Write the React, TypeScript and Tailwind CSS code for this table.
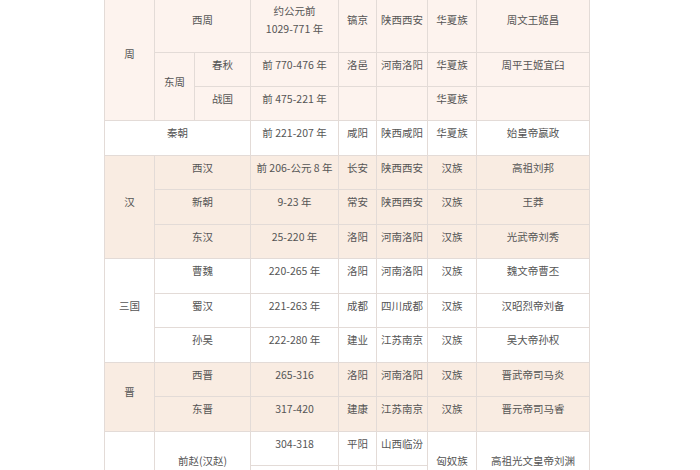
import React from "react";

type CellProps = {
  children?: React.ReactNode;
  colSpan?: number;
  rowSpan?: number;
};

function C({ children, colSpan, rowSpan }: CellProps) {
  return (
    <td
      colSpan={colSpan}
      rowSpan={rowSpan}
      className="border border-[#e3dbd7] text-center align-middle px-0 pt-0 pb-[10px] leading-[18px]"
    >
      {children}
    </td>
  );
}

export default function App() {
  const zhou = "bg-[#fdf3ee]";
  const han = "bg-[#f9ece2]";
  const white = "bg-white";
  return (
    <div className="w-[700px] h-[470px] overflow-hidden bg-white">
      <table
        className="ml-[104px] -mt-[3px] border-collapse table-fixed w-[485px] text-[10.5px] text-[#555555]"
        style={{ fontFamily: '"Noto Sans CJK SC", "Noto Sans", sans-serif' }}
      >
        <colgroup>
          <col className="w-[50px]" />
          <col className="w-[40px]" />
          <col className="w-[56px]" />
          <col className="w-[88px]" />
          <col className="w-[38px]" />
          <col className="w-[51px]" />
          <col className="w-[49px]" />
          <col className="w-[113px]" />
        </colgroup>
        <tbody>
          <tr className={`${zhou} h-[55px]`}>
            <C rowSpan={3}>周</C>
            <C colSpan={2}>西周</C>
            <C>
              约公元前
              <br />
              1029-771 年
            </C>
            <C>镐京</C>
            <C>陕西西安</C>
            <C>华夏族</C>
            <C>周文王姬昌</C>
          </tr>
          <tr className={`${zhou} h-[34px]`}>
            <C rowSpan={2}>东周</C>
            <C>春秋</C>
            <C>前 770-476 年</C>
            <C>洛邑</C>
            <C>河南洛阳</C>
            <C>华夏族</C>
            <C>周平王姬宜臼</C>
          </tr>
          <tr className={`${zhou} h-[34px]`}>
            <C>战国</C>
            <C>前 475-221 年</C>
            <C></C>
            <C></C>
            <C>华夏族</C>
            <C></C>
          </tr>
          <tr className={`${white} h-[35px]`}>
            <C colSpan={3}>秦朝</C>
            <C>前 221-207 年</C>
            <C>咸阳</C>
            <C>陕西咸阳</C>
            <C>华夏族</C>
            <C>始皇帝嬴政</C>
          </tr>
          <tr className={`${han} h-[34px]`}>
            <C rowSpan={3}>汉</C>
            <C colSpan={2}>西汉</C>
            <C>前 206-公元 8 年</C>
            <C>长安</C>
            <C>陕西西安</C>
            <C>汉族</C>
            <C>高祖刘邦</C>
          </tr>
          <tr className={`${han} h-[35px]`}>
            <C colSpan={2}>新朝</C>
            <C>9-23 年</C>
            <C>常安</C>
            <C>陕西西安</C>
            <C>汉族</C>
            <C>王莽</C>
          </tr>
          <tr className={`${han} h-[34px]`}>
            <C colSpan={2}>东汉</C>
            <C>25-220 年</C>
            <C>洛阳</C>
            <C>河南洛阳</C>
            <C>汉族</C>
            <C>光武帝刘秀</C>
          </tr>
          <tr className={`${white} h-[35px]`}>
            <C rowSpan={3}>三国</C>
            <C colSpan={2}>曹魏</C>
            <C>220-265 年</C>
            <C>洛阳</C>
            <C>河南洛阳</C>
            <C>汉族</C>
            <C>魏文帝曹丕</C>
          </tr>
          <tr className={`${white} h-[34px]`}>
            <C colSpan={2}>蜀汉</C>
            <C>221-263 年</C>
            <C>成都</C>
            <C>四川成都</C>
            <C>汉族</C>
            <C>汉昭烈帝刘备</C>
          </tr>
          <tr className={`${white} h-[35px]`}>
            <C colSpan={2}>孙吴</C>
            <C>222-280 年</C>
            <C>建业</C>
            <C>江苏南京</C>
            <C>汉族</C>
            <C>吴大帝孙权</C>
          </tr>
          <tr className={`${han} h-[34px]`}>
            <C rowSpan={2}>晋</C>
            <C colSpan={2}>西晋</C>
            <C>265-316</C>
            <C>洛阳</C>
            <C>河南洛阳</C>
            <C>汉族</C>
            <C>晋武帝司马炎</C>
          </tr>
          <tr className={`${han} h-[35px]`}>
            <C colSpan={2}>东晋</C>
            <C>317-420</C>
            <C>建康</C>
            <C>江苏南京</C>
            <C>汉族</C>
            <C>晋元帝司马睿</C>
          </tr>
          <tr className={`${white} h-[34px]`}>
            <C rowSpan={2}></C>
            <C colSpan={2} rowSpan={2}>
              前赵(汉赵)
            </C>
            <C>304-318</C>
            <C>平阳</C>
            <C>山西临汾</C>
            <C rowSpan={2}>匈奴族</C>
            <C rowSpan={2}>高祖光文皇帝刘渊</C>
          </tr>
          <tr className={`${white} h-[34px]`}>
            <C></C>
            <C></C>
            <C></C>
          </tr>
        </tbody>
      </table>
    </div>
  );
}
